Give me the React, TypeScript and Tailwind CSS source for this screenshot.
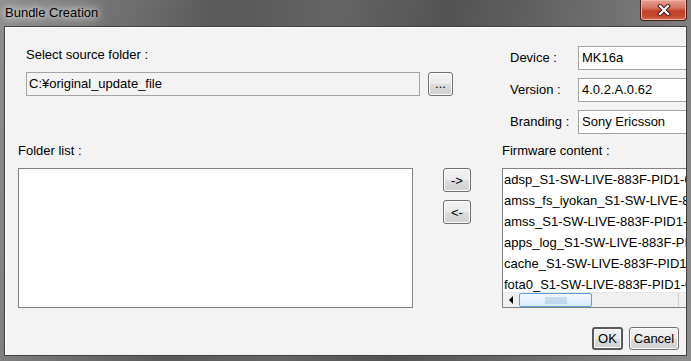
import React from 'react';

const FONT = { fontFamily: '"Liberation Sans", Arial, sans-serif' };

const firmwareItems = [
  'adsp_S1-SW-LIVE-883F-PID1-0004-MMC.sin',
  'amss_fs_iyokan_S1-SW-LIVE-883F-PID1.sin',
  'amss_S1-SW-LIVE-883F-PID1-0004-MMC.sin',
  'apps_log_S1-SW-LIVE-883F-PID1-0004.sin',
  'cache_S1-SW-LIVE-883F-PID1-0004-MMC.sin',
  'fota0_S1-SW-LIVE-883F-PID1-0004-MMC.sin',
];

// Win7 style push button
const WinButton = ({ label, className = '', isDefault = false }: { label: string; className?: string; isDefault?: boolean }) => (
  <button
    className={`flex items-center justify-center rounded-[3px] text-[13px] leading-none text-black bg-[linear-gradient(#f2f2f2_0%,#ebebeb_50%,#dddddd_51%,#cfcfcf_100%)] shadow-[inset_0_0_0_1px_#fcfcfc] ${
      isDefault ? 'border-2 border-[#5a5a5a]' : 'border border-[#707070]'
    } ${className}`}
  >
    {label}
  </button>
);

const Field = ({ label, value }: { label: string; value: string }) => (
  <div className="flex items-center h-[24px]">
    <span className="w-[68px] shrink-0 text-[13px] leading-[16px] text-black">{label}</span>
    <div className="h-[24px] w-[130px] shrink-0 border border-[#a5a5a5] bg-white flex items-center pl-[3px] text-[13px] text-black whitespace-nowrap">
      {value}
    </div>
  </div>
);

export default function App() {
  return (
    <div
      className="w-[691px] h-[361px] flex flex-col overflow-hidden bg-[linear-gradient(100deg,#8f8f8f_0%,#747474_14%,#595959_30%,#656565_45%,#525252_60%,#6e6e6e_80%,#8c8c8c_100%)]"
      style={FONT}
    >
      {/* title bar */}
      <div className="h-[26px] shrink-0 flex items-start relative">
        <span className="mt-[5px] ml-[5px] text-[13px] leading-[15px] text-black [text-shadow:0_0_6px_#ffffff,0_0_12px_#d8d8d8,0_0_14px_#c8c8c8]">
          Bundle Creation
        </span>
        <div className="absolute right-[4px] top-0 w-[47px] h-[21px] rounded-b-[4px] border border-t-0 border-[#4a1c14] bg-[linear-gradient(#e7a394_0%,#d5725f_40%,#c1412a_55%,#c4492f_80%,#d66a4c_100%)] shadow-[inset_0_0_0_1px_#f0b4a6] flex items-center justify-center">
          <svg width="14" height="12" viewBox="0 0 14 12">
            <path d="M3 2 L11 10 M11 2 L3 10" stroke="#3b1a14" strokeWidth="4" strokeLinecap="square" />
            <path d="M3 2 L11 10 M11 2 L3 10" stroke="#ffffff" strokeWidth="2.2" strokeLinecap="square" />
          </svg>
        </div>
      </div>

      {/* client area */}
      <div className="mx-[4px] mb-[5px] flex-1 border border-[#3e3e3e] bg-[#f3f3f3] overflow-hidden flex flex-col shadow-[inset_1px_1px_0_#ffffff]">
        {/* top section */}
        <div className="flex items-start h-[107px] shrink-0">
          <div className="ml-[21px] mt-[20px] flex flex-col">
            <span className="text-[13px] leading-[16px] text-black">Select source folder :</span>
            <div className="mt-[9px] flex items-center gap-[8px]">
              <div className="w-[394px] h-[24px] border border-[#a5a5a5] bg-[#f3f3f3] flex items-center pl-[2px] text-[13px] text-black">
                C:¥original_update_file
              </div>
              <WinButton label="..." className="w-[25px] h-[24px] text-[#6b4a1a] pb-[2px]" />
            </div>
          </div>
          <div className="ml-[57px] mt-[19px] flex flex-col gap-[8px]">
            <Field label="Device :" value="MK16a" />
            <Field label="Version :" value="4.0.2.A.0.62" />
            <Field label="Branding :" value="Sony Ericsson" />
          </div>
        </div>

        {/* lists */}
        <div className="flex items-start mt-[9px]">
          <div className="ml-[13px] flex flex-col">
            <span className="text-[13px] leading-[16px] text-black">Folder list :</span>
            <div className="mt-[9px] w-[395px] h-[140px] border border-[#828282] bg-white" />
          </div>
          <div className="ml-[30px] mt-[25px] flex flex-col gap-[8px]">
            <WinButton label="->" className="w-[28px] h-[24px]" />
            <WinButton label="<-" className="w-[28px] h-[24px]" />
          </div>
          <div className="ml-[31px] flex flex-col">
            <span className="text-[13px] leading-[16px] text-black whitespace-nowrap">Firmware content :</span>
            <div className="mt-[9px] w-[200px] h-[140px] border border-[#828282] bg-white flex flex-col">
              <div className="flex-1 overflow-hidden flex flex-col">
                {firmwareItems.map((item) => (
                  <div key={item} className="h-[21px] shrink-0 flex items-center pl-[1px] text-[13px] text-black whitespace-nowrap">
                    {item}
                  </div>
                ))}
              </div>
              {/* horizontal scrollbar */}
              <div className="h-[15px] shrink-0 flex bg-[#f0f0f0] border-t border-[#e6e6e6]">
                <div className="w-[16px] h-full flex items-center justify-center">
                  <svg width="5" height="8" viewBox="0 0 5 8">
                    <path d="M4 0 L0 4 L4 8 Z" fill="#000" />
                  </svg>
                </div>
                <div className="w-[73px] h-full rounded-[2px] border border-[#5d9ee0] bg-[linear-gradient(#f4f9fe,#d9eafa)] flex items-center justify-center">
                  <div className="w-[22px] h-[7px] bg-[radial-gradient(#9dbde0_0.6px,transparent_0.8px)] bg-[length:2px_2px]" />
                </div>
                <div className="w-[87px] h-full border-r border-[#cfcfcf]" />
                <div className="w-[16px] h-full" />
              </div>
            </div>
          </div>
        </div>

        {/* bottom buttons */}
        <div className="mt-[19px] flex justify-end gap-[6px] pr-[7px]">
          <WinButton label="OK" isDefault className="w-[31px] h-[23px]" />
          <WinButton label="Cancel" className="w-[50px] h-[23px]" />
        </div>
      </div>
    </div>
  );
}
